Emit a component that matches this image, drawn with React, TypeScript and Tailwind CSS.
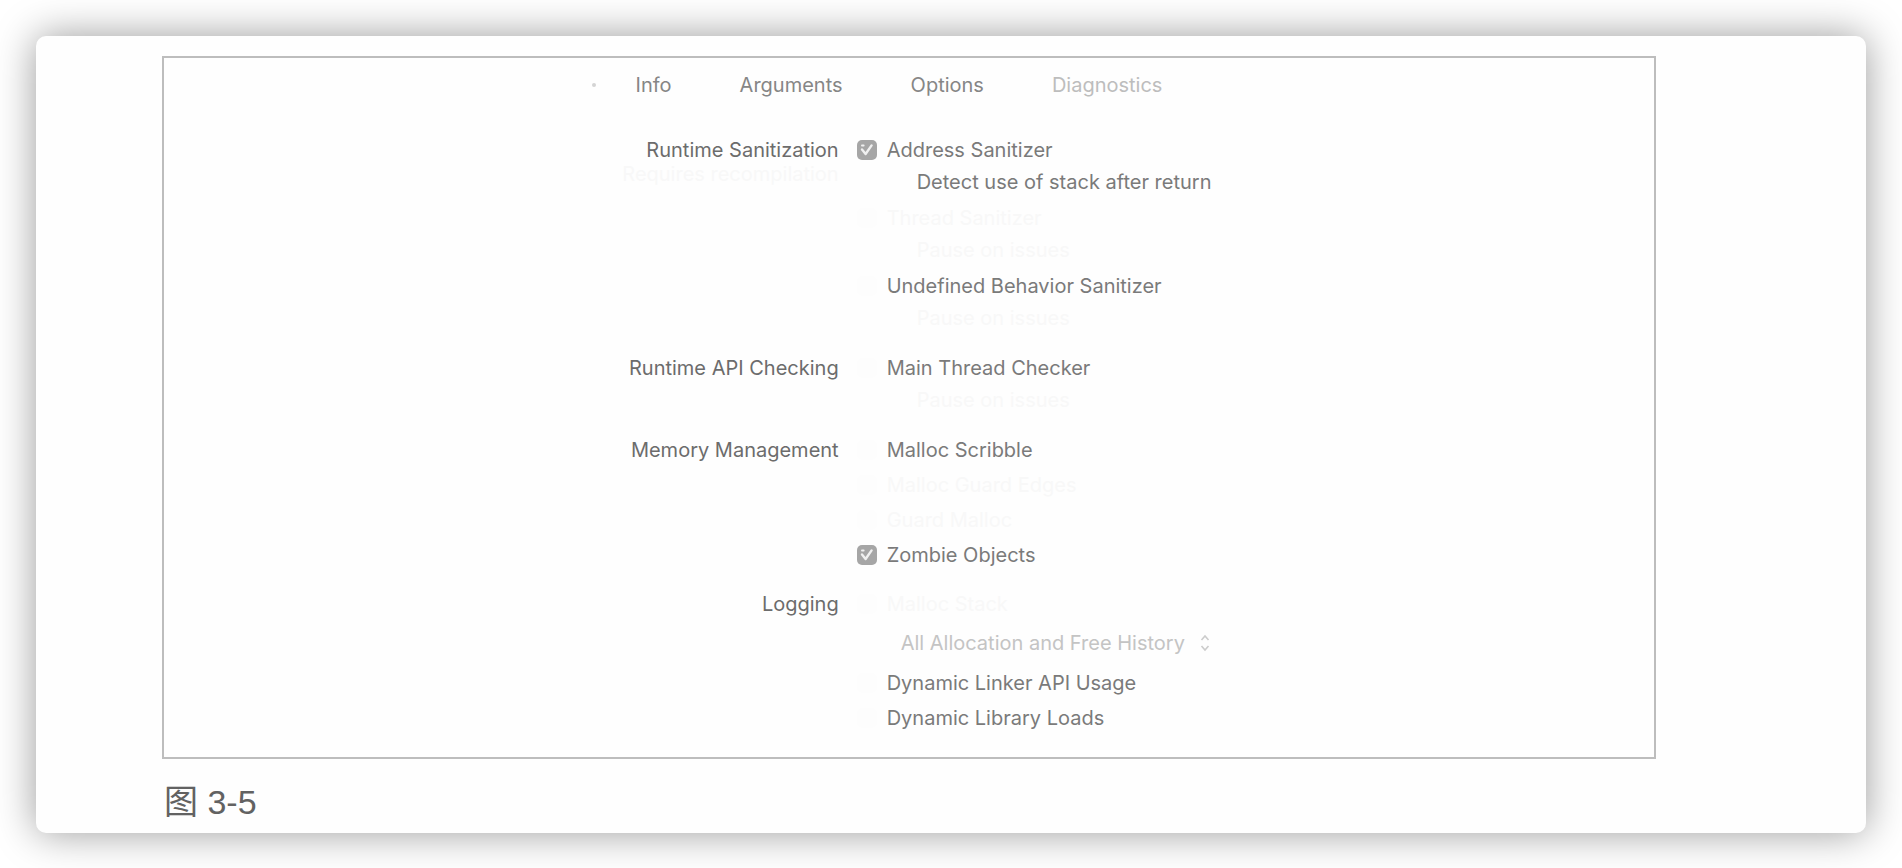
import type { ReactNode } from "react";

const tabs = ["Info", "Arguments", "Options"];

type OptionProps = {
  id: string;
  label: string;
  checked?: boolean;
  sub?: boolean;
  faint?: boolean;
  tight?: boolean;
};

function Option({ id, label, checked, sub, faint, tight }: OptionProps) {
  return (
    <div
      className={`flex h-8 items-center gap-[10px] ${sub ? "mb-1 pl-[30px]" : tight ? "" : "mb-[3px]"}`}
    >
      <span className="relative flex size-5 shrink-0">
        <input
          id={id}
          type="checkbox"
          defaultChecked={checked}
          className={`size-5 appearance-none rounded-[5px] ${sub ? "bg-transparent" : "bg-[#fdfdfd]"} checked:bg-[#a6a6a6]`}
        />
        {checked && (
          <svg
            viewBox="0 0 20 20"
            className="pointer-events-none absolute inset-0 size-5"
            fill="none"
            stroke="#f0f0f0"
            strokeWidth="2.4"
            strokeLinecap="round"
            strokeLinejoin="round"
            aria-hidden="true"
          >
            <path d="M5 9.5 8.6 14 14.6 5.4" />
            <path d="M5 5.600h1.600" strokeWidth="2" />
          </svg>
        )}
      </span>
      <label htmlFor={id} className={faint ? "text-[#f8f8f8]" : "text-[#7a7a7a]"}>
        {label}
      </label>
    </div>
  );
}

function Group({ title, note, children }: { title: string; note?: string; children: ReactNode }) {
  return (
    <fieldset className="contents">
      <div className="text-right text-[#6c6c6c]">
        <div className="leading-8">{title}</div>
        {note && <div className="-mt-1 leading-6 text-[#f8f8f8]">{note}</div>}
      </div>
      <div>{children}</div>
    </fieldset>
  );
}

export default function App() {
  return (
    <div className="flow-root bg-white font-['Inter',sans-serif] text-[20px]">
      <main className="m-9 rounded-[10px] bg-[#fefefe] pt-5 pr-[210px] pb-[10px] pl-[126px] shadow-[0_0_40px_rgba(0,0,0,0.4)]">
        <section className="border-2 border-[#bdbdbd] pb-5">
          <nav className="flex items-center justify-center gap-[68px] pt-[11px] pr-16 leading-8">
            <span className="-mr-7 size-1 rounded-full bg-[#d4d4d4]" />
            {tabs.map((tab) => (
              <button key={tab} type="button" className="text-[#868686]">
                {tab}
              </button>
            ))}
            <button type="button" aria-current="page" className="text-[#bdbdbd]">
              Diagnostics
            </button>
          </nav>

          <form className="mt-[33px] grid grid-cols-[11fr_13fr] gap-x-[18px] gap-y-[14px]">
            <Group title="Runtime Sanitization" note="Requires recompilation">
              <Option id="address" label="Address Sanitizer" checked tight />
              <Option id="stack-use" label="Detect use of stack after return" sub />
              <Option id="thread" label="Thread Sanitizer" faint tight />
              <Option id="thread-pause" label="Pause on issues" sub faint />
              <Option id="undefined" label="Undefined Behavior Sanitizer" tight />
              <Option id="undefined-pause" label="Pause on issues" sub faint />
            </Group>
            <Group title="Runtime API Checking">
              <Option id="main-thread" label="Main Thread Checker" tight />
              <Option id="main-thread-pause" label="Pause on issues" sub faint />
            </Group>
            <Group title="Memory Management">
              <Option id="scribble" label="Malloc Scribble" />
              <Option id="guard-edges" label="Malloc Guard Edges" faint />
              <Option id="guard-malloc" label="Guard Malloc" faint />
              <Option id="zombies" label="Zombie Objects" checked />
            </Group>
            <Group title="Logging">
              <Option id="malloc-stack" label="Malloc Stack" faint />
              <div className="mb-1 flex h-10 items-center pl-11">
                <div className="relative flex items-center">
                  <select
                    aria-label="Malloc stack history"
                    className="appearance-none bg-transparent pr-6 text-[#c4c4c4]"
                  >
                    <option>All Allocation and Free History</option>
                  </select>
                  <svg
                    viewBox="0 0 10 18"
                    className="pointer-events-none absolute right-0 h-[18px] w-[10px]"
                    fill="none"
                    stroke="#cccccc"
                    strokeWidth="1.6"
                    aria-hidden="true"
                  >
                    <path d="M1.5 6 5 2l3.500 4M1.500 12 5 16l3.500-4" />
                  </svg>
                </div>
              </div>
              <Option id="linker" label="Dynamic Linker API Usage" />
              <Option id="library" label="Dynamic Library Loads" />
            </Group>
          </form>
        </section>
        <p className="mt-[23px] pl-0.5 font-['Liberation_Sans','Noto_Sans_CJK_SC',sans-serif] text-[34px] leading-[41px] text-[#626262]">
          图 3-5
        </p>
      </main>
    </div>
  );
}
